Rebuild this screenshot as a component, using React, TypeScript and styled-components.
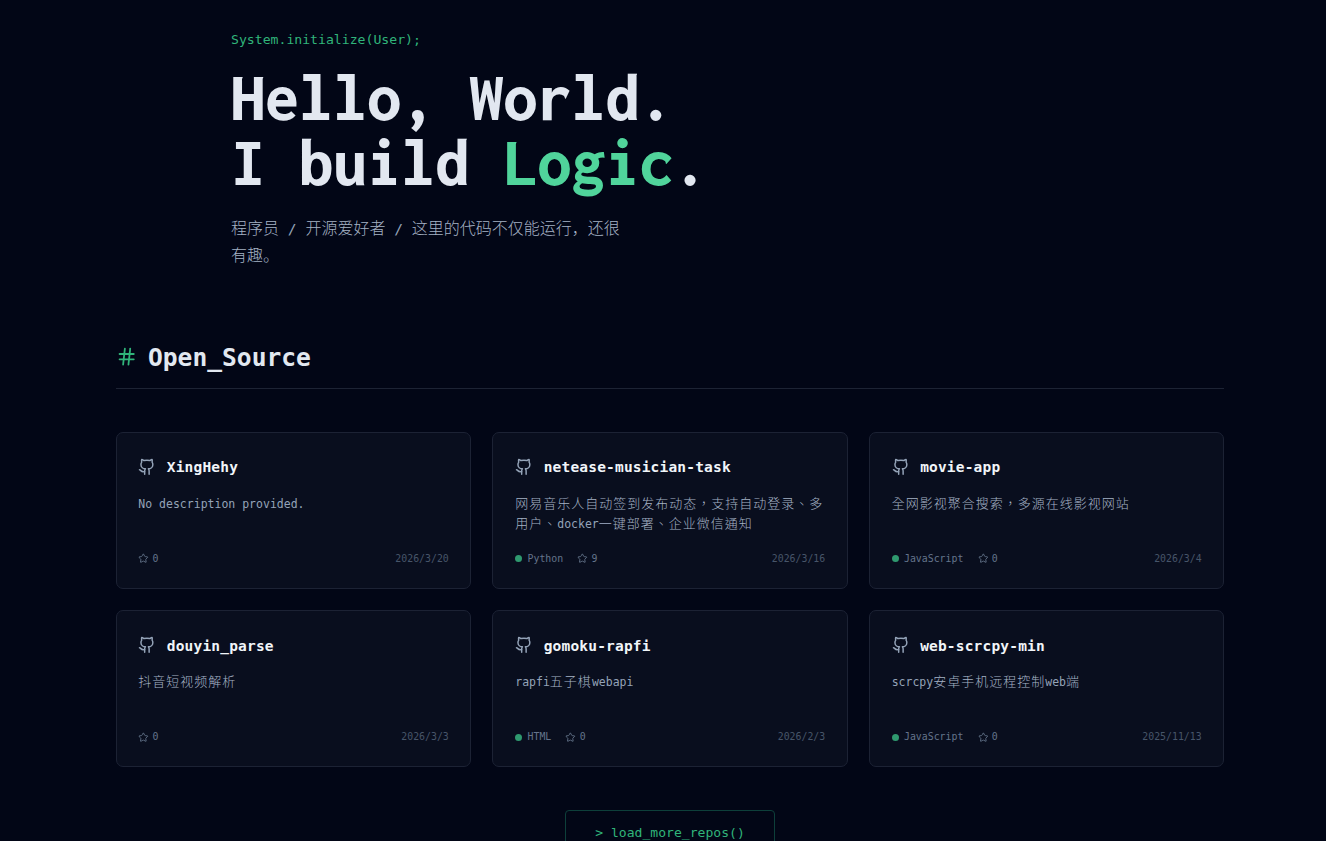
import React from "react";
import styled, { createGlobalStyle } from "styled-components";
import { Github, Hash, Star } from "lucide-react";

const display = '"Inconsolata", "DejaVu Sans Mono", monospace';
const mono = '"DejaVu Sans Mono", "Noto Sans CJK SC", monospace';

const GlobalStyle = createGlobalStyle`
  * { box-sizing: border-box; }
  body { margin: 0; overflow: hidden; background: #020616; }
`;

const Page = styled.div`
  height: 841px;
  overflow: hidden;
  padding: 0 102px 0 116px;
  font-family: ${mono};
  color: #e2e8f0;
`;

const Hero = styled.header`
  padding: 30px 0 0 115px;
`;

const Eyebrow = styled.div`
  height: 20px;
  line-height: 20px;
  font-size: 13.15px;
  color: #30b47a;
  white-space: nowrap;
`;

const Headline = styled.h1`
  margin: 15px 0 0;
  font-family: ${display};
  font-size: 68px;
  line-height: 65px;
  letter-spacing: 0.05px;
  font-weight: 850;
  color: #e2e7f0;
  white-space: nowrap;
`;

const Accent = styled.span`
  color: #50d49b;
`;

const Intro = styled.p`
  width: 398px;
  margin: 19px 0 0;
  font-family: "Noto Sans CJK SC", sans-serif;
  font-size: 16px;
  font-weight: 300;
  line-height: 27px;
  color: #a5b2c5;
`;

const Latin = styled.span<{ $size: number }>`
  font-family: ${mono};
  font-size: ${(p) => p.$size}px;
  font-weight: 400;
  line-height: 1;
  letter-spacing: 0;
  color: #94a3b8;
`;

const SectionHead = styled.div`
  display: flex;
  align-items: center;
  gap: 10.67px;
  height: 61px;
  margin-top: 60px;
  padding-bottom: 2px;
  border-bottom: 1px solid #1d2334;
  svg { color: #30b47a; }
`;

const SectionTitle = styled.h2`
  margin: 0;
  padding-top: 2px;
  font-size: 24.6px;
  line-height: 36px;
  font-weight: 700;
`;

const Grid = styled.div`
  display: grid;
  grid-template-columns: repeat(3, 1fr);
  grid-auto-rows: 157px;
  gap: 21.33px;
  margin-top: 43px;
`;

const Card = styled.article`
  display: flex;
  flex-direction: column;
  min-width: 0;
  padding: 21.33px 21.33px 22.3px;
  border: 1px solid #1c2234;
  border-radius: 7px;
  background: #090e1e;
  &:not(:nth-child(3n + 1)) { padding-left: 21.8px; }
`;

const CardHead = styled.div`
  display: flex;
  align-items: center;
  gap: 10.67px;
  height: 25px;
  color: #94a3b8;
`;

const Name = styled.h3`
  margin: 0;
  padding-top: 0.8px;
  font-size: 14.5px;
  letter-spacing: 0.18px;
  line-height: 24px;
  font-weight: 700;
  color: #f1f5f9;
  white-space: nowrap;
`;

const Description = styled.p`
  margin: 13.3px -4px 0 0;
  height: 41px;
  font-family: "Noto Sans CJK TC", "Noto Sans CJK SC", sans-serif;
  font-size: 13px;
  font-weight: 300;
  letter-spacing: 1px;
  line-height: 20.2px;
  color: #a5b2c5;
`;

const Meta = styled.footer`
  display: flex;
  align-items: center;
  gap: 14.2px;
  margin-top: auto;
  height: 14px;
  font-size: 9.87px;
  line-height: 14px;
  color: #64748b;
`;

const MetaItem = styled.span<{ $gap: number }>`
  display: flex;
  align-items: center;
  gap: ${(p) => p.$gap}px;
`;

const Dot = styled.i`
  width: 7px;
  height: 7px;
  border-radius: 50%;
  background: #2f996f;
`;

const DateText = styled.time`
  margin-left: auto;
  color: #475569;
`;

const More = styled.button`
  display: block;
  width: 210px;
  height: 46px;
  margin: 43px auto 0;
  padding: 0;
  border: 1px solid #0d3f3a;
  border-radius: 4px;
  background: transparent;
  font: 400 13.08px/44px ${mono};
  color: #30b47a;
  white-space: nowrap;
`;

type Repo = { name: string; desc: string; lang?: string; stars: number; date: string };

const repos: Repo[] = [
  { name: "XingHehy", desc: "No description provided.", stars: 0, date: "2026/3/20" },
  { name: "netease-musician-task", desc: "网易音乐人自动签到发布动态，支持自动登录、多用户、docker一键部署、企业微信通知", lang: "Python", stars: 9, date: "2026/3/16" },
  { name: "movie-app", desc: "全网影视聚合搜索，多源在线影视网站", lang: "JavaScript", stars: 0, date: "2026/3/4" },
  { name: "douyin_parse", desc: "抖音短视频解析", stars: 0, date: "2026/3/3" },
  { name: "gomoku-rapfi", desc: "rapfi五子棋webapi", lang: "HTML", stars: 0, date: "2026/2/3" },
  { name: "web-scrcpy-min", desc: "scrcpy安卓手机远程控制web端", lang: "JavaScript", stars: 0, date: "2025/11/13" },
];

/* Latin runs use the monospace face, the rest keeps the Chinese face. */
function Mixed({ text, size }: { text: string; size: number }) {
  return (
    <>
      {text.split(/([\x20-\x7e]+)/).map((run, i) =>
        i % 2 ? <Latin key={i} $size={size}>{run}</Latin> : run
      )}
    </>
  );
}

function RepoCard({ repo }: { repo: Repo }) {
  return (
    <Card>
      <CardHead>
        <Github size={17.8} />
        <Name>{repo.name}</Name>
      </CardHead>
      <Description><Mixed text={repo.desc} size={11.5} /></Description>
      <Meta>
        {repo.lang && <MetaItem $gap={5.3}><Dot />{repo.lang}</MetaItem>}
        <MetaItem $gap={3.6}><Star size={10.67} />{repo.stars}</MetaItem>
        <DateText>{repo.date}</DateText>
      </Meta>
    </Card>
  );
}

export default function App() {
  return (
    <Page>
      <GlobalStyle />
      <Hero>
        <Eyebrow>System.initialize(User);</Eyebrow>
        <Headline>
          Hello, World.<br />
          I build <Accent>Logic</Accent>.
        </Headline>
        <Intro><Mixed text="程序员 / 开源爱好者 / 这里的代码不仅能运行，还很有趣。" size={14.6} /></Intro>
      </Hero>
      <SectionHead>
        <Hash size={21.33} />
        <SectionTitle>Open_Source</SectionTitle>
      </SectionHead>
      <Grid>{repos.map((r) => <RepoCard key={r.name} repo={r} />)}</Grid>
      <More>&gt; load_more_repos()</More>
    </Page>
  );
}
